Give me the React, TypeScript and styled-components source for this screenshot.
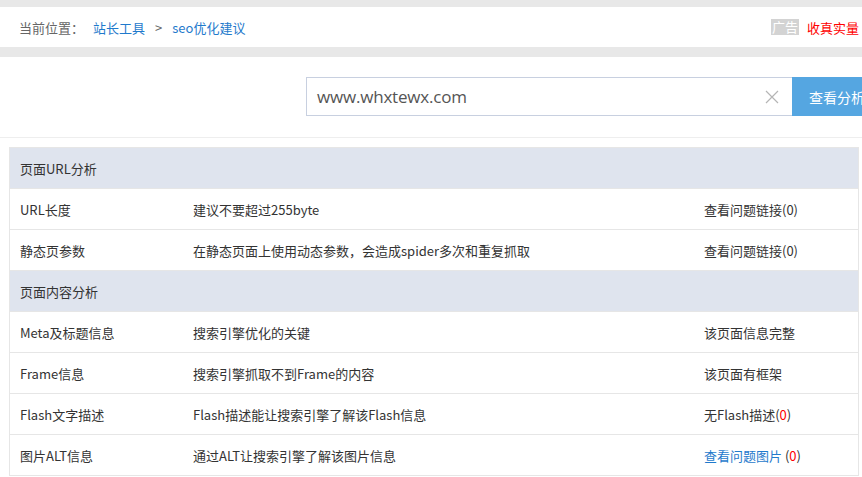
import styled, { createGlobalStyle } from 'styled-components';

const GlobalStyle = createGlobalStyle`
  html, body {
    margin: 0;
    padding: 0;
    background: #fff;
    overflow: hidden;
  }
  body {
    font-family: "Noto Sans CJK SC", "Noto Sans", sans-serif;
    font-size: 13px;
    color: #333;
  }
`;

const Page = styled.div`
  width: 862px;
  overflow: hidden;
`;

const Gap = styled.div<{ $h: number }>`
  height: ${(p) => p.$h}px;
  background: #e8e8e8;
`;

const Crumbs = styled.div`
  height: 40px;
  display: flex;
  align-items: center;
  justify-content: space-between;
  padding: 0 3px 0 19px;
`;

const CrumbLeft = styled.div`
  display: flex;
  align-items: center;
  gap: 0;
  color: #666;
  font-size: 13px;
`;

const CrumbLink = styled.a<{ $first?: boolean }>`
  color: #1f7acc;
  text-decoration: none;
  margin-left: ${(p) => (p.$first ? 9 : 0)}px;
`;

const Sep = styled.span`
  color: #666;
  margin: 0 10px 0 10px;
`;

const Ad = styled.div`
  display: flex;
  align-items: center;
  gap: 8px;
`;

const AdTag = styled.span`
  background: #d3d3d3;
  color: #fff;
  height: 16px;
  line-height: 16px;
  padding: 0 1px;
  font-size: 13px;
`;

const AdLink = styled.a`
  color: #f00;
  text-decoration: none;
  font-size: 13px;
`;

const SearchBar = styled.div`
  height: 81px;
  box-sizing: border-box;
  border-bottom: 1px solid #eee;
  display: flex;
  align-items: flex-start;
  padding: 20px 0 0 306px;
`;

const InputBox = styled.div`
  flex: none;
  width: 486px;
  height: 39px;
  box-sizing: border-box;
  border: 1px solid #c8d0e0;
  border-right: none;
  display: flex;
  align-items: center;
  padding: 0 13px 0 10px;
`;

const UrlText = styled.span`
  flex: 1;
  font-size: 17px;
  color: #555;
  font-family: "Open Sans", "Noto Sans CJK SC", sans-serif;
  letter-spacing: -0.2px;
`;

const Clear = styled.svg`
  width: 14px;
  height: 14px;
`;

const Button = styled.button`
  flex: none;
  width: 90px;
  height: 39px;
  border: none;
  background: #55a6e1;
  color: #fff;
  font-family: "Noto Sans CJK SC", sans-serif;
  font-size: 14px;
  text-align: left;
  padding: 0 0 0 17px;
`;

const Table = styled.div`
  margin: 9px 3px 0 9px;
  border: 1px solid #e6e6e6;
  border-top: none;
`;

const HeadRow = styled.div`
  height: 40px;
  border-top: 1px solid #e6e6e6;
  background: #dfe4ee;
  display: flex;
  align-items: center;
  padding-left: 10px;
  color: #333;
`;

const Row = styled.div`
  height: 40px;
  border-top: 1px solid #e6e6e6;
  display: grid;
  grid-template-columns: 173px 511px 1fr;
  align-items: center;
  padding-left: 10px;
  color: #333;
`;

const Link = styled.a`
  color: #1f7acc;
  text-decoration: none;
`;

const Red = styled.span`
  color: #f00;
`;

type Item = { name: string; desc: string; result: React.ReactNode };

const groups: { title: string; items: Item[] }[] = [
  {
    title: '页面URL分析',
    items: [
      { name: 'URL长度', desc: '建议不要超过255byte', result: '查看问题链接(0)' },
      { name: '静态页参数', desc: '在静态页面上使用动态参数，会造成spider多次和重复抓取', result: '查看问题链接(0)' },
    ],
  },
  {
    title: '页面内容分析',
    items: [
      { name: 'Meta及标题信息', desc: '搜索引擎优化的关键', result: '该页面信息完整' },
      { name: 'Frame信息', desc: '搜索引擎抓取不到Frame的内容', result: '该页面有框架' },
      {
        name: 'Flash文字描述',
        desc: 'Flash描述能让搜索引擎了解该Flash信息',
        result: (
          <>
            无Flash描述(<Red>0</Red>)
          </>
        ),
      },
      {
        name: '图片ALT信息',
        desc: '通过ALT让搜索引擎了解该图片信息',
        result: (
          <>
            <Link href="#">查看问题图片</Link> (<Red>0</Red>)
          </>
        ),
      },
    ],
  },
];

export default function App() {
  return (
    <Page>
      <GlobalStyle />
      <Gap $h={7} />
      <Crumbs>
        <CrumbLeft>
          <span>当前位置：</span>
          <CrumbLink href="#" $first>站长工具</CrumbLink>
          <Sep>&gt;</Sep>
          <CrumbLink href="#">seo优化建议</CrumbLink>
        </CrumbLeft>
        <Ad>
          <AdTag>广告</AdTag>
          <AdLink href="#">收真实量</AdLink>
        </Ad>
      </Crumbs>
      <Gap $h={10} />
      <SearchBar>
        <InputBox>
          <UrlText>www.whxtewx.com</UrlText>
          <Clear viewBox="0 0 14 14">
            <path d="M1 1L13 13M13 1L1 13" stroke="#b5b5b5" strokeWidth="1.2" fill="none" />
          </Clear>
        </InputBox>
        <Button>查看分析</Button>
      </SearchBar>
      <Table>
        {groups.map((g) => (
          <div key={g.title}>
            <HeadRow>{g.title}</HeadRow>
            {g.items.map((it) => (
              <Row key={it.name}>
                <span>{it.name}</span>
                <span>{it.desc}</span>
                <span>{it.result}</span>
              </Row>
            ))}
          </div>
        ))}
      </Table>
    </Page>
  );
}
